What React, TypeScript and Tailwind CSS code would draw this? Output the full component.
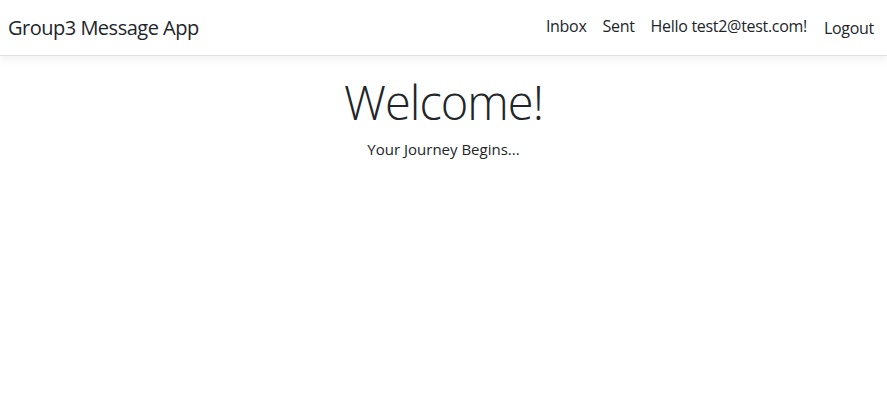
import React from 'react';

const font = { fontFamily: '"Open Sans", "Noto Sans", Arial, sans-serif' };

export default function App() {
  return (
    <div className="min-h-[419px] bg-white text-[#212529]" style={font}>
      {/* Navbar */}
      <header className="h-[56px] border-b border-[#dee2e6] shadow-[0_4px_8px_rgba(0,0,0,0.05)] flex items-center justify-between pl-2 pr-[13px]">
        <a className="text-[20px] tracking-[-0.5px] text-[#212529] leading-none">Group3 Message App</a>
        <nav className="flex items-center -mt-[3px]">
          <a className="px-2 text-[16px] tracking-[-0.3px] leading-none">Inbox</a>
          <a className="px-2 text-[16px] tracking-[-0.3px] leading-none">Sent</a>
          <a className="px-2 text-[16px] tracking-[-0.3px] leading-none">Hello test2@test.com!</a>
          <button className="pl-[9px] text-[16px] tracking-[-0.3px] leading-none mt-[3px]">Logout</button>
        </nav>
      </header>

      {/* Main */}
      <main className="flex flex-col items-center pt-[18px]">
        <h1 className="text-[47px] font-light leading-[1.2] tracking-[-1px]">Welcome!</h1>
        <p className="mt-[8px] text-[15px] tracking-[0px]">Your Journey Begins...</p>
      </main>
    </div>
  );
}
